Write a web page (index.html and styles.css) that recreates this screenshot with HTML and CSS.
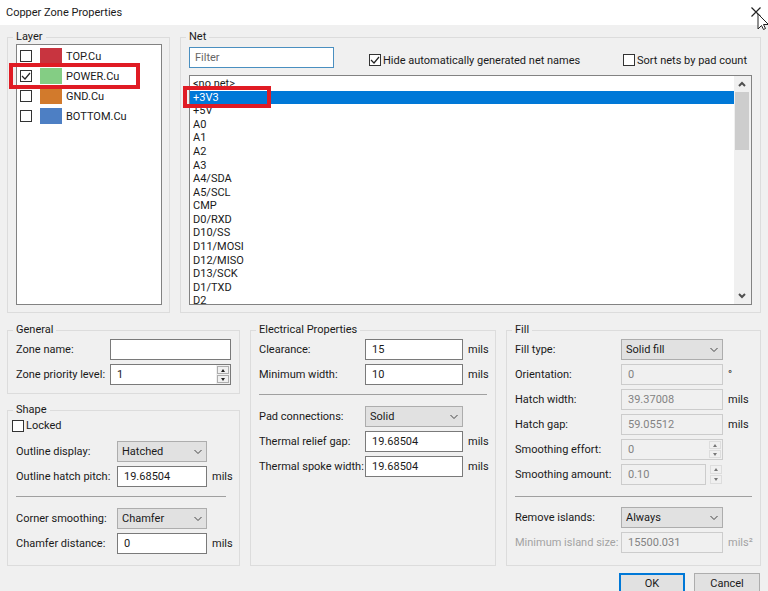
FILE: index.html
```html
<!DOCTYPE html>
<html lang="en">
<head>
    <meta charset="UTF-8">
    <meta name="viewport" content="width=device-width, initial-scale=1.0">
    <title>Copper Zone Properties</title>
    <link rel="stylesheet" href="styles.css">
</head>
<body>
    <header class="titlebar">
        <h1>Copper Zone Properties</h1>
        <button type="button" class="close" aria-label="Close">
            <svg width="12" height="12" viewBox="0 0 12 12"><path d="M1.5 1.5l9 9M10.5 1.5l-9 9" stroke="#222" stroke-width="1.2" fill="none"/></svg>
        </button>
        <svg class="pointer" width="11" height="18" viewBox="0 0 11 18"><path d="M1 1v15l3.500-3.500 2 4 2-1-2-4h5z" fill="#fff" stroke="#222"/></svg>
    </header>

    <form class="dialog">
        <div class="top">
            <fieldset class="layer">
                <legend>Layer</legend>
                <ul class="layer-list">
                    <li><input type="checkbox" id="top-cu"><span class="swatch red"></span><label for="top-cu">TOP.Cu</label></li>
                    <li class="marked"><input type="checkbox" id="power-cu" checked><span class="swatch green"></span><label for="power-cu">POWER.Cu</label></li>
                    <li><input type="checkbox" id="gnd-cu"><span class="swatch orange"></span><label for="gnd-cu">GND.Cu</label></li>
                    <li><input type="checkbox" id="bottom-cu"><span class="swatch blue"></span><label for="bottom-cu">BOTTOM.Cu</label></li>
                </ul>
            </fieldset>

            <fieldset class="net">
                <legend>Net</legend>
                <div class="net-bar">
                    <input type="text" class="filter" placeholder="Filter" aria-label="Filter">
                    <span class="check"><input type="checkbox" id="hide-auto" checked><label for="hide-auto">Hide automatically generated net names</label></span>
                    <span class="check"><input type="checkbox" id="sort-nets"><label for="sort-nets">Sort nets by pad count</label></span>
                </div>
                <div class="net-box">
                    <div class="net-scroll">
                        <ul class="net-list" role="listbox" aria-label="Net">
                            <li role="option">&lt;no net&gt;</li>
                            <li role="option" class="selected" aria-selected="true">+3V3</li>
                            <li role="option">+5V</li>
                            <li role="option">A0</li>
                            <li role="option">A1</li>
                            <li role="option">A2</li>
                            <li role="option">A3</li>
                            <li role="option">A4/SDA</li>
                            <li role="option">A5/SCL</li>
                            <li role="option">CMP</li>
                            <li role="option">D0/RXD</li>
                            <li role="option">D10/SS</li>
                            <li role="option">D11/MOSI</li>
                            <li role="option">D12/MISO</li>
                            <li role="option">D13/SCK</li>
                            <li role="option">D1/TXD</li>
                            <li role="option">D2</li>
                        </ul>
                    </div>
                    <div class="scrollbar">
                        <button type="button" aria-label="Scroll up"><svg width="8" height="6" viewBox="0 0 8 6"><path d="M1 5l3-3 3 3" fill="none" stroke="#505050" stroke-width="2"/></svg></button>
                        <div class="thumb"></div>
                        <button type="button" class="down" aria-label="Scroll down"><svg width="8" height="6" viewBox="0 0 8 6"><path d="M1 1l3 3 3-3" fill="none" stroke="#505050" stroke-width="2"/></svg></button>
                    </div>
                    <div class="net-mark"></div>
                </div>
            </fieldset>
        </div>

        <div class="bottom">
            <div class="left">
                <fieldset class="general">
                    <legend>General</legend>
                    <div class="fields">
                        <label for="zone-name">Zone name:</label>
                        <input type="text" id="zone-name">
                        <label for="priority">Zone priority level:</label>
                        <div class="spin">
                            <input type="text" id="priority" value="1">
                            <div class="arrows">
                                <button type="button" aria-label="Increase"><i class="up"></i></button>
                                <button type="button" aria-label="Decrease"><i class="dn"></i></button>
                            </div>
                        </div>
                    </div>
                </fieldset>

                <fieldset class="shape">
                    <legend>Shape</legend>
                    <span class="check locked"><input type="checkbox" id="locked"><label for="locked">Locked</label></span>
                    <div class="fields">
                        <label for="outline">Outline display:</label>
                        <select id="outline"><option>Hatched</option></select>
                        <span></span>
                        <label for="pitch">Outline hatch pitch:</label>
                        <input type="text" id="pitch" value="19.68504">
                        <span>mils</span>
                        <hr>
                        <label for="corner">Corner smoothing:</label>
                        <select id="corner"><option>Chamfer</option></select>
                        <span></span>
                        <label for="chamfer">Chamfer distance:</label>
                        <input type="text" id="chamfer" value="0">
                        <span>mils</span>
                    </div>
                </fieldset>
            </div>

            <fieldset class="electrical">
                <legend>Electrical Properties</legend>
                <div class="fields">
                    <label for="clearance">Clearance:</label>
                    <input type="text" id="clearance" value="15">
                    <span>mils</span>
                    <label for="min-width">Minimum width:</label>
                    <input type="text" id="min-width" value="10">
                    <span>mils</span>
                    <hr>
                    <label for="pads">Pad connections:</label>
                    <select id="pads"><option>Solid</option></select>
                    <span></span>
                    <label for="relief">Thermal relief gap:</label>
                    <input type="text" id="relief" value="19.68504">
                    <span>mils</span>
                    <label for="spoke">Thermal spoke width:</label>
                    <input type="text" id="spoke" value="19.68504">
                    <span>mils</span>
                </div>
            </fieldset>

            <fieldset class="fill">
                <legend>Fill</legend>
                <div class="fields">
                    <label for="fill-type">Fill type:</label>
                    <select id="fill-type"><option>Solid fill</option></select>
                    <span></span>
                    <label for="orientation">Orientation:</label>
                    <input type="text" id="orientation" value="0" disabled>
                    <span>°</span>
                    <label for="hatch-width">Hatch width:</label>
                    <input type="text" id="hatch-width" value="39.37008" disabled>
                    <span>mils</span>
                    <label for="hatch-gap">Hatch gap:</label>
                    <input type="text" id="hatch-gap" value="59.05512" disabled>
                    <span>mils</span>
                    <label for="effort">Smoothing effort:</label>
                    <div class="spin off">
                        <input type="text" id="effort" value="0" disabled>
                        <div class="arrows">
                            <button type="button" aria-label="Increase" disabled><i class="up"></i></button>
                            <button type="button" aria-label="Decrease" disabled><i class="dn"></i></button>
                        </div>
                    </div>
                    <span></span>
                    <label for="amount">Smoothing amount:</label>
                    <div class="spin off split">
                        <input type="text" id="amount" value="0.10" disabled>
                        <div class="arrows">
                            <button type="button" aria-label="Increase" disabled><i class="up"></i></button>
                            <button type="button" aria-label="Decrease" disabled><i class="dn"></i></button>
                        </div>
                    </div>
                    <span></span>
                    <hr>
                    <label for="islands">Remove islands:</label>
                    <select id="islands"><option>Always</option></select>
                    <span></span>
                    <label for="island-size" class="dim">Minimum island size:</label>
                    <input type="text" id="island-size" value="15500.031" disabled>
                    <span class="dim">mils²</span>
                </div>
            </fieldset>
        </div>

        <div class="actions">
            <button type="button" class="ok">OK</button>
            <button type="button">Cancel</button>
        </div>
    </form>
</body>
</html>
```
FILE: styles.css
```css
*, *::after {
    box-sizing: border-box;
}

body {
    margin: 0;
    height: 100vh;
    overflow: hidden;
    background: #f0f0f0;
    color: #1a1a1a;
    font: 11px/13px Roboto, "Open Sans", sans-serif;
}

input, select, button {
    font: inherit;
    color: inherit;
    margin: 0;
}

ul {
    list-style: none;
    margin: 0;
    padding: 0;
}

/* Title bar */
.titlebar {
    position: relative;
    display: flex;
    justify-content: space-between;
    align-items: center;
    height: 25px;
    padding: 0 6px 1px;
    background: #fff;
}

.titlebar h1 {
    margin: 0;
    font-size: 11px;
    font-weight: normal;
}

.close {
    display: flex;
    border: 0;
    padding: 0;
    background: none;
}

.pointer {
    position: absolute;
    right: 0;
    top: 13px;
}

/* Groups */
.dialog {
    padding: 5px 7px 0;
}

fieldset {
    min-width: 0;
    margin: 0;
    padding: 0 8px 8px;
    border: 1px solid #dcdcdc;
}

legend {
    height: 14px;
    margin-left: -3px;
    padding: 0 3px;
}

.top {
    display: grid;
    grid-template-columns: 163fr 581fr;
    grid-template-rows: minmax(0, 1fr);
    gap: 10px;
    height: 283px;
    margin-bottom: 10px;
}

.top fieldset {
    display: flex;
    flex-direction: column;
    padding-bottom: 7px;
}

/* Check boxes */
input[type="checkbox"] {
    appearance: none;
    flex: none;
    width: 12px;
    height: 12px;
    border: 1px solid #333;
    background: #fff;
}

input[type="checkbox"]:checked {
    background: #fff url("data:image/svg+xml,%3Csvg xmlns='http://www.w3.org/2000/svg' viewBox='0 0 10 10'%3E%3Cpath d='M1 5l3 3 5-6' fill='none' stroke='%23222' stroke-width='1.2'/%3E%3C/svg%3E") center / 10px 10px no-repeat;
}

.check {
    display: flex;
    align-items: center;
    gap: 2px;
    white-space: nowrap;
}

/* Layer list */
.layer-list {
    flex: 1;
    margin-right: -1px;
    padding-top: 1px;
    border: 1px solid #828282;
    background: #fff;
}

.layer-list li {
    position: relative;
    display: flex;
    align-items: center;
    height: 20px;
    padding-left: 3px;
}

.swatch {
    width: 22px;
    height: 16px;
    margin: 0 4px 0 8px;
}

.red { background: #c8343f; }
.green { background: #84cd84; }
.orange { background: #d27a2c; }
.blue { background: #4d7fc4; }

/* Red highlight frames */
.marked::after, .net-mark {
    content: "";
    position: absolute;
    z-index: 1;
    border: 4px solid #e01b24;
}

.marked::after {
    left: -8px;
    top: -3px;
    width: 131px;
    height: 26px;
}

.net-mark {
    left: -7px;
    top: 10px;
    width: 88px;
    height: 22px;
}

/* Net list */
.net-bar {
    display: grid;
    grid-template-columns: 145px 1fr auto;
    column-gap: 35px;
    height: 31px;
    padding-top: 3px;
    padding-right: 5px;
}

.net-bar .check {
    height: 26px;
}

.net-bar input.filter {
    border-color: #4a8fc0;
    padding-left: 5px;
}

.filter::placeholder {
    color: #666;
}

.net-box {
    position: relative;
    flex: 1;
    min-height: 0;
    display: flex;
    border: 1px solid #828282;
    background: #fff;
}

.net-scroll {
    flex: 1;
    overflow: hidden;
}

.net-list {
    display: grid;
    grid-auto-rows: 1fr;
    height: 231px;
    margin-top: 1px;
}

.net-list li {
    padding-left: 3px;
}

.net-list .selected {
    background: #0078d7;
    color: #fff;
}

.scrollbar {
    display: flex;
    flex-direction: column;
    width: 17px;
    padding: 0 2px 0 1px;
    background: #f0f0f0;
}

.scrollbar button {
    display: flex;
    justify-content: center;
    align-items: center;
    height: 16px;
    border: 0;
    padding: 0;
    background: none;
}

.thumb {
    height: 58px;
    background: #cdcdcd;
}

.scrollbar .down {
    margin-top: auto;
}

/* Field rows */
.bottom {
    display: grid;
    grid-template-columns: 233fr 246fr 255fr;
    column-gap: 10px;
}

.left {
    display: flex;
    flex-direction: column;
    gap: 9px;
}

.shape {
    flex: 1;
}

.fields {
    display: grid;
    row-gap: 4px;
    align-items: center;
    padding-top: 2px;
}

.fields label {
    white-space: nowrap;
}

.fields span {
    padding-left: 5px;
}

.general .fields {
    grid-template-columns: 94px 1fr;
}

.shape .fields {
    grid-template-columns: 101px 1fr 24px;
}

.electrical .fields {
    grid-template-columns: 106px 1fr 24px;
}

.fill .fields {
    grid-template-columns: 106px 1fr 29px;
}

.fill {
    padding-bottom: 12px;
}

.locked {
    margin: 2px 0 7px -4px;
}

.fields hr {
    grid-column: 1 / -1;
    justify-self: stretch;
    margin: 5px 0 7px;
    border: 0;
    border-top: 1px solid #a0a0a0;
}

.shape .fields hr {
    margin-right: 5px;
}

.fill .fields hr {
    margin: 7px 0 6px;
}

.dim {
    color: #a3a3a3;
}

input[type="text"] {
    width: 100%;
    min-width: 0;
    height: 21px;
    border: 1px solid #7a7a7a;
    padding: 0 6px;
    background: #fff;
}

input[type="text"]:disabled {
    border-color: #ccc;
    background: #f0f0f0;
    color: #838383;
}

select {
    appearance: none;
    width: 100%;
    height: 21px;
    border: 1px solid #adadad;
    border-radius: 0;
    padding: 0 4px;
    background: #e1e1e1 url("data:image/svg+xml,%3Csvg xmlns='http://www.w3.org/2000/svg' viewBox='0 0 8 6'%3E%3Cpath d='M.5 1L4 4.500 7.500 1' fill='none' stroke='%23444'/%3E%3C/svg%3E") right 4px center / 8px 6px no-repeat;
}

/* Spin controls */
.spin {
    display: flex;
    height: 21px;
    border: 1px solid #7a7a7a;
    background: #fff;
}

.spin input[type="text"] {
    height: 19px;
    border: 0;
}

.arrows {
    display: flex;
    flex-direction: column;
    flex: none;
    width: 14px;
    padding: 1px;
    gap: 1px;
    background: #f0f0f0;
}

.arrows button {
    flex: 1;
    display: flex;
    justify-content: center;
    align-items: center;
    border: 1px solid #adadad;
    padding: 0;
    background: #f0f0f0;
}

.arrows i {
    border: 2px solid transparent;
}

.arrows .up {
    border-top: 0;
    border-bottom: 3px solid #222;
}

.arrows .dn {
    border-bottom: 0;
    border-top: 3px solid #222;
}

.spin.off {
    border-color: #ccc;
    background: #f0f0f0;
}

.off .arrows button {
    border-color: #ddd;
}

.off .arrows .up {
    border-bottom-color: #777;
}

.off .arrows .dn {
    border-top-color: #777;
}

.split {
    border: 0;
    gap: 3px;
}

.spin.split input[type="text"] {
    height: 21px;
    border: 1px solid #ccc;
}

/* Buttons */
.actions {
    display: flex;
    justify-content: flex-end;
    gap: 9px;
    margin-top: 7px;
    padding-right: 1px;
}

.actions button {
    width: 66px;
    height: 20px;
    border: 1px solid #adadad;
    padding: 0;
    background: #e1e1e1;
}

.actions .ok {
    border: 2px solid #0078d7;
}
```
